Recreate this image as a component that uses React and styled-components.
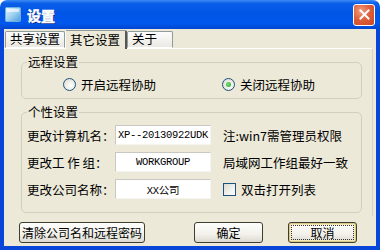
import React from 'react';
import styled, { createGlobalStyle } from 'styled-components';

const Global = createGlobalStyle`
  html, body { margin: 0; padding: 0; background: #fff; }
  body { font-family: "Noto Sans CJK SC", "Noto Sans", sans-serif; font-size: 12px; color: #000; }
`;

const Win = styled.div`
  width: 380px;
  height: 250px;
  display: flex;
  flex-direction: column;
  box-sizing: border-box;
  overflow: hidden;
`;

const TitleBar = styled.div`
  height: 29px;
  flex: none;
  display: flex;
  align-items: center;
  padding: 0 5px 0 5px;
  border-radius: 7px 7px 0 0;
  background: linear-gradient(#3d8bf5 0%, #0a5ee8 12%, #0055e5 45%, #0058ee 80%, #0046d0 100%);
`;

const TitleText = styled.span`
  color: #fff;
  font-weight: 700;
  font-size: 14px;
  margin-left: 6px;
  flex: 1;
  -webkit-text-stroke: 0.5px #fff;
  text-shadow: 1px 1px 0 #0a1e7a;
`;

const CloseBtn = styled.div`
  width: 20px;
  height: 20px;
  border: 1px solid #fff;
  border-radius: 3px;
  background: radial-gradient(circle at 35% 30%, #f0a080 0%, #e0603c 45%, #c84420 100%);
  display: flex;
  align-items: center;
  justify-content: center;
`;

const Frame = styled.div`
  flex: 1;
  background: #ece9d8;
  border: 4px solid #0846da;
  border-top: none;
  display: flex;
  flex-direction: column;
`;

const TabStrip = styled.div`
  height: 19px;
  display: flex;
  align-items: flex-end;
  padding-left: 1px;
  margin-right: 3px;
`;

const Tab = styled.div`
  height: ${p => (p.active ? 19 : 17)}px;
  width: ${p => p.w}px;
  box-sizing: border-box;
  border: 1px solid #919b9c;
  border-bottom: ${p => (p.active ? 'none' : '1px solid #fff')};
  border-left: ${p => (p.active ? '1px solid #fff' : '1px solid #919b9c')};
  border-right: ${p => (p.active ? '2px solid #555' : '1px solid #919b9c')};
  border-radius: 2px 2px 0 0;
  background: ${p => (p.active ? '#ece9d8' : 'linear-gradient(#fcfcfe, #eae9e2)')};
  display: flex;
  align-items: center;
  padding-left: 4px;
  font-size: 12.5px;
  line-height: 1;
  white-space: nowrap;
  margin-bottom: ${p => (p.active ? -1 : 0)}px;
  position: relative;
`;

const Panel = styled.div`
  height: 168px;
  margin-right: 3px;
  box-sizing: border-box;
  border-top: 1px solid #fff;
  border-right: 1px solid #d8d4c4;
  padding: 7px 10px 0 17px;
  display: flex;
  flex-direction: column;
  gap: 7px;
`;

const Group = styled.fieldset`
  margin: 0;
  padding: 0;
  border: 1px solid #d0d0bf;
  border-radius: 5px;
  height: ${p => p.h}px;
  box-sizing: border-box;
  min-width: 0;
`;

const Legend = styled.legend`
  padding: 0 1px;
  margin-left: 5px;
  font-size: 12.5px;
  line-height: 12px;
`;

const RadioRow = styled.div`
  display: flex;
  align-items: center;
  padding: 7px 0 0 41px;
`;

const RadioItem = styled.label`
  display: flex;
  align-items: center;
  gap: 5px;
  width: ${p => p.w}px;
  font-size: 12.5px;
`;

const RadioCircle = styled.span`
  width: 11px;
  height: 11px;
  border-radius: 50%;
  border: 1px solid #1c5180;
  background: radial-gradient(circle at 60% 60%, #fff 0%, #e8e8e0 60%, #d0d0c8 100%);
  display: flex;
  align-items: center;
  justify-content: center;
`;

const Dot = styled.span`
  width: 5px;
  height: 5px;
  border-radius: 50%;
  background: radial-gradient(circle at 40% 40%, #7ce07c, #21a121);
`;

const Rows = styled.div`
  display: flex;
  flex-direction: column;
  gap: 7px;
  padding: 7px 0 0 5px;
`;

const Row = styled.div`
  display: flex;
  align-items: center;
  height: 20px;
`;

const RowLabel = styled.span`
  width: 88px;
  font-size: 12.5px;
  white-space: pre;
`;

const Input = styled.div`
  width: 96px;
  height: 20px;
  box-sizing: border-box;
  border: 1px solid;
  border-color: #c8c8c0 #f4f4f0 #f4f4f0 #c8c8c0;
  background: #fff;
  display: flex;
  align-items: center;
  justify-content: center;
  font-family: "Liberation Mono", "Noto Sans CJK SC", monospace;
  font-size: 10.5px;
  letter-spacing: -0.3px;
`;

const Note = styled.span`
  margin-left: 12px;
  font-size: 12.5px;
  display: flex;
  align-items: center;
  gap: 5px;
`;

const Check = styled.span`
  width: 11px;
  height: 11px;
  border: 1px solid #1c5180;
  background: linear-gradient(135deg, #dcdcd4, #fff);
`;

const Buttons = styled.div`
  display: flex;
  align-items: center;
  padding: 6px 0 0 15px;
`;

const Button = styled.div`
  width: ${p => p.w}px;
  height: 21px;
  flex: none;
  margin-left: ${p => p.ml || 0}px;
  box-sizing: border-box;
  border: 1px solid #3e3e30;
  border-radius: 3px;
  background: linear-gradient(#fefefe, #f2f1ea 60%, #dcdad0);
  display: flex;
  align-items: center;
  justify-content: center;
  font-size: 12px;
  white-space: nowrap;
  box-shadow: ${p => (p.focus ? 'inset 0 0 0 1px #d8c88c, inset 0 0 0 2px #f6eab8' : 'none')};
  position: relative;
  &::after {
    content: '';
    display: ${p => (p.focus ? 'block' : 'none')};
    position: absolute;
    inset: 2px;
    border: 1px dotted #333;
  }
`;

const WinIcon = () => (
  <svg width="16" height="15" viewBox="0 0 16 15">
    <defs>
      <linearGradient id="ig" x1="0" y1="0" x2="1" y2="1">
        <stop offset="0" stopColor="#e8f6ff" />
        <stop offset="0.5" stopColor="#9fd2f2" />
        <stop offset="1" stopColor="#4a9ad8" />
      </linearGradient>
    </defs>
    <rect x="0.5" y="0.5" width="15" height="14" rx="1" fill="url(#ig)" stroke="#6fb0e0" />
    <rect x="2" y="2" width="12" height="3" fill="#ffffff" opacity="0.6" />
  </svg>
);

const App = () => (
  <>
    <Global />
    <Win>
      <TitleBar>
        <WinIcon />
        <TitleText>设置</TitleText>
        <CloseBtn>
          <svg width="11" height="11" viewBox="0 0 11 11">
            <path d="M1.5 1.5 L9.5 9.5 M9.5 1.5 L1.5 9.5" stroke="#fff" strokeWidth="2" strokeLinecap="square" />
          </svg>
        </CloseBtn>
      </TitleBar>
      <Frame>
        <TabStrip>
          <Tab w={60}>共享设置</Tab>
          <Tab w={62} active>其它设置</Tab>
          <Tab w={46}>关于</Tab>
        </TabStrip>
        <Panel>
          <Group h={43}>
            <Legend>远程设置</Legend>
            <RadioRow>
              <RadioItem w={159}>
                <RadioCircle />
                开启远程协助
              </RadioItem>
              <RadioItem>
                <RadioCircle>
                  <Dot />
                </RadioCircle>
                关闭远程协助
              </RadioItem>
            </RadioRow>
          </Group>
          <Group h={107}>
            <Legend>个性设置</Legend>
            <Rows>
              <Row>
                <RowLabel>更改计算机名：</RowLabel>
                <Input>XP--20130922UDK</Input>
                <Note>注:win7需管理员权限</Note>
              </Row>
              <Row>
                <RowLabel>{'更改工 作 组：'}</RowLabel>
                <Input>WORKGROUP</Input>
                <Note>局域网工作组最好一致</Note>
              </Row>
              <Row>
                <RowLabel>更改公司名称：</RowLabel>
                <Input>XX公司</Input>
                <Note>
                  <Check />
                  双击打开列表
                </Note>
              </Row>
            </Rows>
          </Group>
        </Panel>
        <Buttons>
          <Button w={126}>清除公司名和远程密码</Button>
          <Button w={69} ml={49}>确定</Button>
          <Button w={69} ml={25} focus>取消</Button>
        </Buttons>
      </Frame>
    </Win>
  </>
);

export default App;
